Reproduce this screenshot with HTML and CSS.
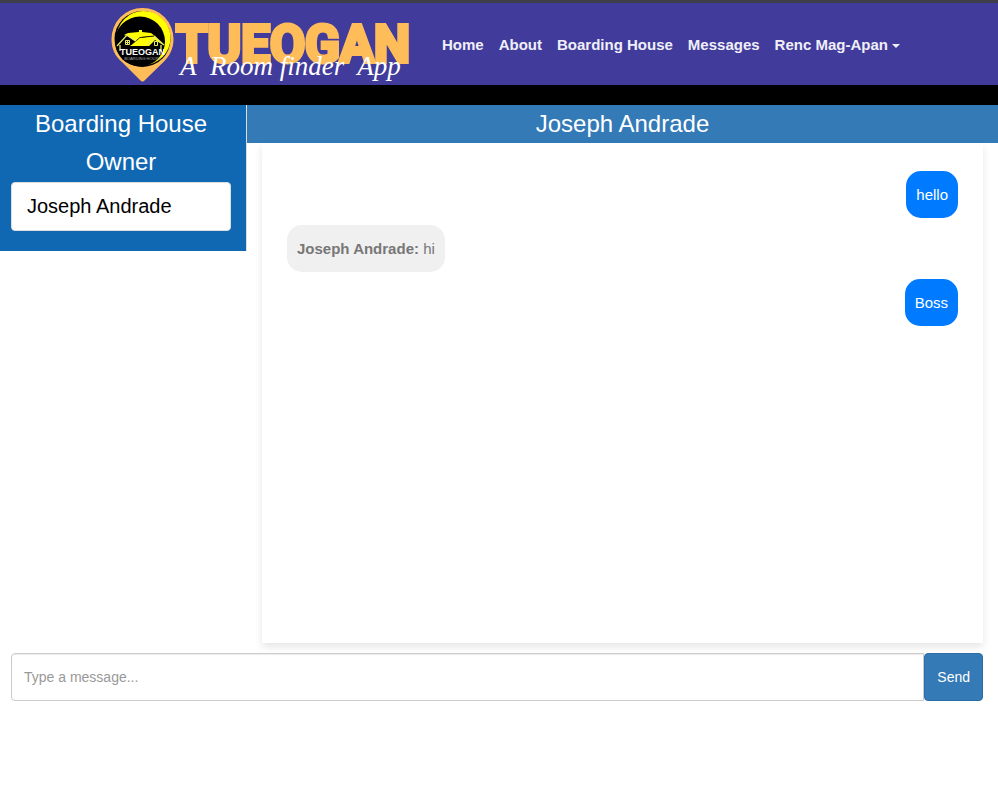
FILE: index.html
```html
<!DOCTYPE html>
<html lang="en">
<head>
<meta charset="utf-8">
<meta name="viewport" content="width=device-width, initial-scale=1">
<title>Tueogan - Messages</title>
<link rel="stylesheet" href="styles.css">
</head>
<body>
<header class="navbar">
  <a class="brand" href="#" aria-label="Tueogan">
    <svg class="logo" width="304" height="78" viewBox="0 0 304 78">
      <path fill="#ffbd59" d="M32.500 2a31 31 0 0 1 31 31c0 10-4 17-10 23L35 74q-2.500 3-5 0L12 56C5 50 1.500 43 1.500 33a31 31 0 0 1 31-31z"/>
      <circle cx="32.500" cy="33" r="28" fill="#000"/>
      <circle cx="33.500" cy="32" r="27" fill="#ffff00"/>
      <circle cx="30" cy="35.500" r="25" fill="#000"/>
      <path fill="#ffff00" d="M14 29l4-2 11-1v-2h3v2l9 1 4 3-13 1-6 5-9-6zM20 40l9-8 16-2 8 9-8-5-6 6z"/>
      <path fill="none" stroke="#000" stroke-width=".8" d="M21 39l9-7.500 14-1.500"/>
      <path fill="none" stroke="#e8e86a" stroke-width="1.300" d="M7 40l10-11 9 6M10 39v6M37 39l8-8 9 8M51 39v6"/>
      <path fill="none" stroke="#e8e86a" d="M15.500 34.500h4v4h-4zM17.500 34.500v4M15.500 36.500h4M44.500 35.500h3v4h-3z"/>
      <text class="pin-name" x="32.500" y="49" text-anchor="middle">TUEOGAN</text>
      <text class="pin-tag" x="32.500" y="54" text-anchor="middle">BOARDING HOUSE</text>
      <text class="wordmark" x="66" y="56">TUEOGAN</text>
      <text class="tagline" x="70" y="69">A&#160; Room finder&#160; App</text>
    </svg>
  </a>
  <nav class="menu">
    <a href="#">Home</a>
    <a href="#">About</a>
    <a href="#">Boarding House</a>
    <a href="#">Messages</a>
    <a href="#">Renc Mag-Apan<span class="caret"></span></a>
  </nav>
</header>
<main>
  <div class="columns">
    <aside class="sidebar">
      <h2 class="title">Boarding House Owner</h2>
      <a class="contact" href="#">Joseph Andrade</a>
    </aside>
    <section class="conversation">
      <h2 class="title chat-title">Joseph Andrade</h2>
      <div class="chat-box">
        <p class="bubble sent">hello</p>
        <p class="bubble received"><strong>Joseph Andrade:</strong> hi</p>
        <p class="bubble sent">Boss</p>
      </div>
    </section>
  </div>
  <form class="composer">
    <input type="text" aria-label="Message" placeholder="Type a message...">
    <button type="button">Send</button>
  </form>
</main>
</body>
</html>
```
FILE: styles.css
```css
* { box-sizing: border-box; }

body {
  margin: 0;
  background: #fff;
  color: #777;
  font: 15px/27px "Liberation Sans", Arial, sans-serif;
}

a { text-decoration: none; }

.navbar {
  display: flex;
  align-items: center;
  gap: 28px;
  padding: 3px 96px 1px 110px;
  background: #413c9c;
  border-top: 3px solid #3d3e47;
  border-bottom: 20px solid #000;
}

.brand, .logo { display: block; }

.logo { font-family: "Liberation Sans", Arial, sans-serif; }

.pin-name { fill: #fff; font-size: 9px; font-weight: 700; }

.pin-tag { fill: #aaa; font-size: 4px; }

.wordmark {
  fill: #ffbd59;
  stroke: #ffbd59;
  stroke-width: 4px;
  font-family: Roboto, "Liberation Sans", sans-serif;
  font-size: 51px;
  font-weight: 700;
}

.tagline {
  fill: #fff;
  font-family: "Liberation Serif", cursive;
  font-size: 27px;
  font-style: italic;
}

.menu {
  display: flex;
  gap: 15px;
  padding-bottom: 2px;
  white-space: nowrap;
}

.menu a {
  color: #f0eff8;
  font-size: 15px;
  font-weight: 700;
}

.caret {
  display: inline-block;
  margin-left: 4px;
  vertical-align: middle;
  border: 4px solid transparent;
  border-top-color: #f0eff8;
  border-bottom: 0;
}

.columns {
  display: flex;
  align-items: flex-start;
}

.sidebar {
  flex: 0 0 247px;
  padding: 0 15px 20px 11px;
  background: #1067b2;
  border-right: 1px solid #ddd;
}

.title {
  margin: 0;
  color: #fff;
  font-size: 24px;
  font-weight: 400;
  line-height: 38px;
  text-align: center;
}

.contact {
  display: block;
  margin-top: 1px;
  padding: 10px 15px;
  background: #fff;
  border: 1px solid #ddd;
  border-radius: 4px;
  color: #000;
  font-size: 20px;
}

.conversation {
  flex: 1;
  min-width: 0;
}

.chat-title { background: #337ab7; }

.chat-box {
  display: flex;
  flex-direction: column;
  gap: 7px;
  min-height: 500px;
  margin: 0 15px;
  padding: 28px 25px;
  box-shadow: 0 4px 8px rgba(0, 0, 0, 0.1);
}

.bubble {
  margin: 0;
  padding: 10px;
  border-radius: 15px;
}

.sent {
  align-self: flex-end;
  background: #007bff;
  color: #fff;
}

.received {
  align-self: flex-start;
  background: #f0f0f0;
}

.composer {
  display: flex;
  margin: 10px 15px 0 11px;
}

.composer input,
.composer button {
  height: 48px;
  padding: 0 12px;
  border-radius: 4px;
  font: 14px "Liberation Sans", Arial, sans-serif;
}

.composer input {
  flex: 1;
  min-width: 0;
  border: 1px solid #ccc;
  border-radius: 4px 0 0 4px;
  box-shadow: inset 0 1px 1px rgba(0, 0, 0, 0.08);
}

.composer input::placeholder { color: #999; opacity: 1; }

.composer button {
  background: #337ab7;
  border: 1px solid #2e6da4;
  color: #fff;
}
```
